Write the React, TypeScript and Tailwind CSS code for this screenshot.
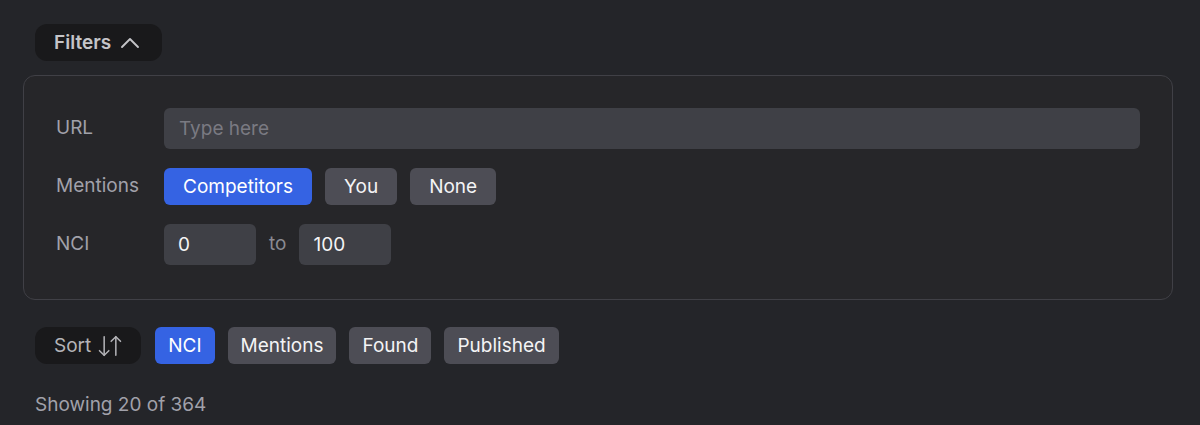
import { ChevronUp, ArrowDownUp } from "lucide-react";

const mentionOptions = ["Competitors", "You", "None"];
const sortOptions = ["NCI", "Mentions", "Found", "Published"];

function Chip({ label, active, tight }: { label: string; active?: boolean; tight?: boolean }) {
  const pad = tight ? "px-[13px]" : "px-[19px]";
  return (
    <button
      className={
        active
          ? `h-[37px] ${pad} pt-[1px] rounded-md bg-[#3563e3] text-white`
          : `h-[37px] ${pad} pt-[1px] rounded-md bg-[#4d4d55] text-[#f4f4f5]`
      }
    >
      {label}
    </button>
  );
}

export default function App() {
  return (
    <div
      className="min-h-screen w-full bg-[#242529] pl-[23px] pr-[27px] pt-6 text-[19px] text-[#a1a1aa]"
      style={{ fontFamily: "Inter, 'Noto Sans', sans-serif" }}
    >
      {/* Filters toggle */}
      <div className="pl-3">
        <button className="h-[37px] pl-[19px] pr-[16px] pt-[1px] rounded-xl bg-[#19191b] flex items-center gap-[3px] font-semibold text-[#c4c4c8]">
          Filters
          <ChevronUp size={32} strokeWidth={1.4} />
        </button>
      </div>

      {/* Filter panel */}
      <div className="mt-[14px] h-[225px] rounded-xl border border-[#404046] bg-[#262629] px-8 pt-8 flex flex-col gap-[19px]">
        <div className="flex items-center">
          <span className="w-[108px] shrink-0">URL</span>
          <input
            placeholder="Type here"
            className="h-[41px] flex-1 rounded-md bg-[#3f4046] px-[15px] text-[#e4e4e7] placeholder:text-[#7a7a82] outline-none"
          />
        </div>

        <div className="flex items-center">
          <span className="w-[108px] shrink-0">Mentions</span>
          <div className="flex gap-[13px]">
            {mentionOptions.map((m, i) => (
              <Chip key={m} label={m} active={i === 0} />
            ))}
          </div>
        </div>

        <div className="flex items-center">
          <span className="w-[108px] shrink-0">NCI</span>
          <input
            defaultValue="0"
            className="h-[41px] w-[92px] rounded-md bg-[#3f4046] px-[14px] text-[#f4f4f5] outline-none"
          />
          <span className="mx-[13px] text-[#8a8a92]">to</span>
          <input
            defaultValue="100"
            className="h-[41px] w-[92px] rounded-md bg-[#3f4046] px-[14px] text-[#f4f4f5] outline-none"
          />
        </div>
      </div>

      {/* Sort row */}
      <div className="mt-[27px] pl-3 flex items-center gap-[13px]">
        <button className="h-[37px] pl-[19px] pr-[17px] mr-[1px] pt-[1px] rounded-xl bg-[#19191b] flex items-center gap-[5px] text-[#b4b4b8]">
          Sort
          <ArrowDownUp size={28} strokeWidth={1.3} />
        </button>
        {sortOptions.map((s, i) => (
          <Chip key={s} label={s} active={i === 0} tight />
        ))}
      </div>

      <p className="mt-[27px] pl-3 text-[#a1a1aa]">Showing 20 of 364</p>
    </div>
  );
}
